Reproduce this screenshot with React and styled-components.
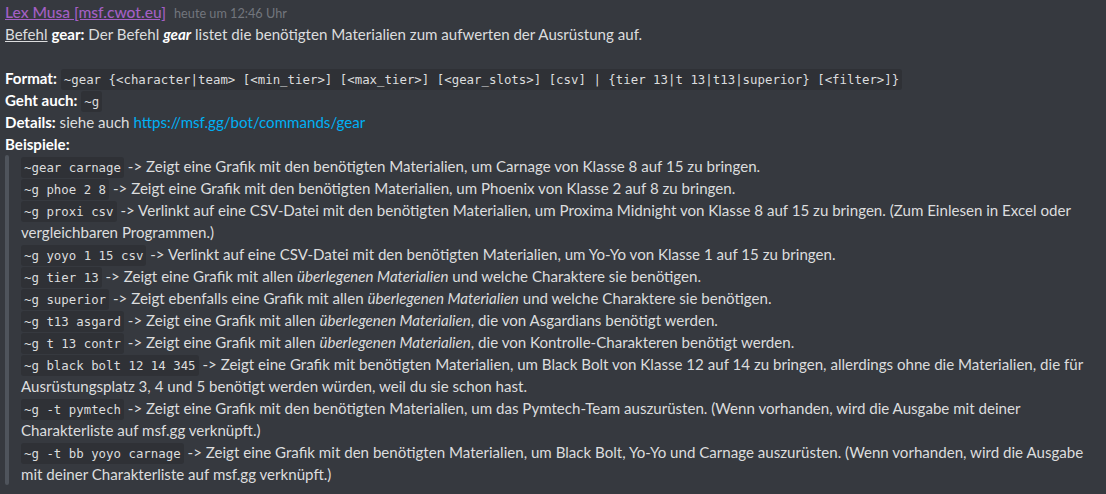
import React from "react";
import styled, { createGlobalStyle } from "styled-components";

const GlobalStyle = createGlobalStyle`
  html, body {
    margin: 0;
    padding: 0;
    background: #36393f;
  }
  body {
    font-family: Lato, "Open Sans", "Noto Sans", sans-serif;
    color: #dcddde;
  }
`;

const Message = styled("div")`
  padding: 1px 8px 0 5px;
  font-size: 15.1px;
  line-height: 22px;
`;

const Header = styled("div")`
  display: flex;
  align-items: baseline;
  height: 22px;
`;

const Username = styled("span")`
  color: #a35fc4;
  font-size: 15.6px;
  font-weight: 500;
  text-decoration: underline;
  cursor: pointer;
`;

const Timestamp = styled("span")`
  margin-left: 8px;
  font-size: 12.7px;
  color: #72767d;
`;

const Line = styled("div")`
  min-height: 22px;
  white-space: pre-wrap;
  word-wrap: break-word;
`;

const Label = styled("strong")`
  font-weight: 700;
  color: ${props => (props.bright ? "#ffffff" : "#dcddde")};
`;

const Underline = styled("span")`
  text-decoration: underline;
`;

const Code = styled("code")`
  font-family: "DejaVu Sans Mono", "Liberation Mono", monospace;
  font-size: 12.4px;
  line-height: 16px;
  background: #2f3136;
  border-radius: 3px;
  padding: 3px 3px;
  white-space: pre-wrap;
`;

const Link = styled("a")`
  color: #00b0f4;
  text-decoration: none;
`;

const Quote = styled("div")`
  display: flex;
`;

const QuoteBar = styled("div")`
  flex: 0 0 4px;
  border-radius: 4px;
  background: #4f545c;
`;

const QuoteBody = styled("blockquote")`
  margin: 0;
  padding: 0 0 0 12px;
  flex: 1;
  min-width: 0;
`;

const examples = [
  {
    code: "~gear carnage",
    text: [" -> Zeigt eine Grafik mit den benötigten Materialien, um Carnage von Klasse 8 auf 15 zu bringen."]
  },
  {
    code: "~g phoe 2 8",
    text: [" -> Zeigt eine Grafik mit den benötigten Materialien, um Phoenix von Klasse 2 auf 8 zu bringen."]
  },
  {
    code: "~g proxi csv",
    text: [
      " -> Verlinkt auf eine CSV-Datei mit den benötigten Materialien, um Proxima Midnight von Klasse 8 auf 15 zu bringen. (Zum Einlesen in Excel oder vergleichbaren Programmen.)"
    ]
  },
  {
    code: "~g yoyo 1 15 csv",
    text: [" -> Verlinkt auf eine CSV-Datei mit den benötigten Materialien, um Yo-Yo von Klasse 1 auf 15 zu bringen."]
  },
  {
    code: "~g tier 13",
    text: [" -> Zeigt eine Grafik mit allen ", { em: "überlegenen Materialien" }, " und welche Charaktere sie benötigen."]
  },
  {
    code: "~g superior",
    text: [" -> Zeigt ebenfalls eine Grafik mit allen ", { em: "überlegenen Materialien" }, " und welche Charaktere sie benötigen."]
  },
  {
    code: "~g t13 asgard",
    text: [" -> Zeigt eine Grafik mit allen ", { em: "überlegenen Materialien" }, ", die von Asgardians benötigt werden."]
  },
  {
    code: "~g t 13 contr",
    text: [" -> Zeigt eine Grafik mit allen ", { em: "überlegenen Materialien" }, ", die von Kontrolle-Charakteren benötigt werden."]
  },
  {
    code: "~g black bolt 12 14 345",
    text: [
      " -> Zeigt eine Grafik mit benötigten Materialien, um Black Bolt von Klasse 12 auf 14 zu bringen, allerdings ohne die Materialien, die für Ausrüstungsplatz 3, 4 und 5 benötigt werden würden, weil du sie schon hast."
    ]
  },
  {
    code: "~g -t pymtech",
    text: [
      " -> Zeigt eine Grafik mit den benötigten Materialien, um das Pymtech-Team auszurüsten. (Wenn vorhanden, wird die Ausgabe mit deiner Charakterliste auf msf.gg verknüpft.)"
    ]
  },
  {
    code: "~g -t bb yoyo carnage",
    text: [
      " -> Zeigt eine Grafik mit den benötigten Materialien, um Black Bolt, Yo-Yo und Carnage auszurüsten. (Wenn vorhanden, wird die Ausgabe mit deiner Charakterliste auf msf.gg verknüpft.)"
    ]
  }
];

const App = () => (
  <>
    <GlobalStyle />
    <Message>
      <Header>
        <Username>Lex Musa [msf.cwot.eu]</Username>
        <Timestamp>heute um 12:46 Uhr</Timestamp>
      </Header>
      <Line>
        <Underline>Befehl</Underline> <Label bright>gear:</Label> Der Befehl{" "}
        <Label bright>
          <em>gear</em>
        </Label>{" "}
        listet die benötigten Materialien zum aufwerten der Ausrüstung auf.
      </Line>
      <Line />
      <Line>
        <Label bright>Format:</Label>{" "}
        <Code>
          ~gear {"{<character|team> [<min_tier>] [<max_tier>] [<gear_slots>] [csv] | {tier 13|t 13|t13|superior} [<filter>]}"}
        </Code>
      </Line>
      <Line>
        <Label bright>Geht auch:</Label> <Code>~g</Code>
      </Line>
      <Line>
        <Label bright>Details:</Label> siehe auch{" "}
        <Link href="#">https://msf.gg/bot/commands/gear</Link>
      </Line>
      <Line>
        <Label bright>Beispiele:</Label>
      </Line>
      <Quote>
        <QuoteBar />
        <QuoteBody>
          {examples.map((ex, i) => (
            <Line key={i}>
              <Code>{ex.code}</Code>
              {ex.text.map((t, j) =>
                typeof t === "string" ? t : <em key={j}>{t.em}</em>
              )}
            </Line>
          ))}
        </QuoteBody>
      </Quote>
    </Message>
  </>
);

export default App;
